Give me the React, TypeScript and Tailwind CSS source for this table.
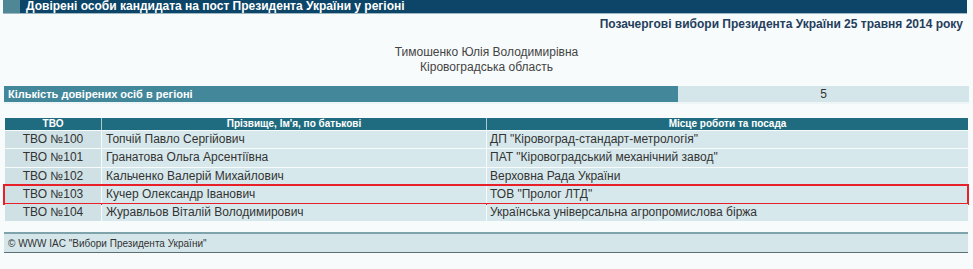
const rows = [
  { tvo: 'ТВО №100', name: 'Топчій Павло Сергійович', place: 'ДП "Кіровоград-стандарт-метрологія"' },
  { tvo: 'ТВО №101', name: 'Гранатова Ольга Арсентіївна', place: 'ПАТ "Кіровоградський механічний завод"' },
  { tvo: 'ТВО №102', name: 'Кальченко Валерій Михайлович', place: 'Верховна Рада України' },
  { tvo: 'ТВО №103', name: 'Кучер Олександр Іванович', place: 'ТОВ "Пролог ЛТД"', marked: true },
  { tvo: 'ТВО №104', name: 'Журавльов Віталій Володимирович', place: 'Українська універсальна агропромислова біржа' },
];

export default function App() {
  return (
    <div className="h-[269px] w-[973px] overflow-hidden bg-[#f8fbfc] font-['Liberation_Sans',Arial,sans-serif] text-[#333]">
      {/* title bar */}
      <div className="ml-[3px] mr-[6px] flex h-[14px] items-stretch border-b border-[#9bb8c4] bg-[#0c4568]">
        <div className="w-[17px] bg-[#4f8796]" />
        <div className="w-[2px] bg-[#0c4568]" />
        <h1 className="pl-[4px] text-[12px] font-bold leading-[13px] text-white">
          Довірені особи кандидата на пост Президента України у регіоні
        </h1>
      </div>

      <p className="mr-[10px] mt-[3px] text-right text-[12px] font-bold leading-[14px] text-[#243e5c]">
        Позачергові вибори Президента України 25 травня 2014 року
      </p>

      <div className="mt-[14px] text-center text-[12px] leading-[15px] text-[#444]">
        <div>Тимошенко Юлія Володимирівна</div>
        <div>Кіровоградська область</div>
      </div>

      {/* count */}
      <div className="mx-[4px] mt-[11px] flex h-[18px] w-[965px] border-b-2 border-[#eef5f7]">
        <div className="flex w-[674px] items-center bg-[#43889a] pl-[4px] text-[11px] font-bold text-white">
          Кількість довірених осіб в регіоні
        </div>
        <div className="flex flex-1 items-center justify-center bg-[#d5e6ea] text-[12px]">5</div>
      </div>

      {/* list */}
      <div className="mx-[5px] mt-[14px] w-[963px]">
        <div className="grid h-[12px] grid-cols-[96px_384px_1fr] gap-x-[1px] bg-[#a9cbd3] text-[10px] font-bold leading-[12px] text-white">
          <div className="bg-[#1f6c80] text-center">ТВО</div>
          <div className="bg-[#1f6c80] text-center">Прізвище, Ім'я, по батькові</div>
          <div className="bg-[#1f6c80] text-center">Місце роботи та посада</div>
        </div>
        {rows.map((r) => (
          <div key={r.tvo} className="relative mt-[1px] grid h-[17.3px] grid-cols-[96px_384px_1fr] gap-x-[1px] text-[12px] leading-[17px]">
            <div className="bg-[#cfe1e5] text-center">{r.tvo}</div>
            <div className="bg-[#d7e8ec] pl-[4px]">{r.name}</div>
            <div className="bg-[#d7e8ec] pl-[3px]">{r.place}</div>
            {r.marked && (
              <div className="absolute left-[-2px] right-[-1px] top-[-2px] bottom-[-2px] border-2 border-[#e8202a]" />
            )}
          </div>
        ))}
      </div>

      {/* footer */}
      <div className="mx-[4px] mt-[11px] flex h-[21px] w-[964px] items-center border-t-2 border-b border-t-[#7ea3aa] border-b-[#5c6f73] bg-[#d5e6ea] pl-[4px] text-[10px] text-[#333]">
        © WWW IAC "Вибори Президента України"
      </div>
    </div>
  );
}
